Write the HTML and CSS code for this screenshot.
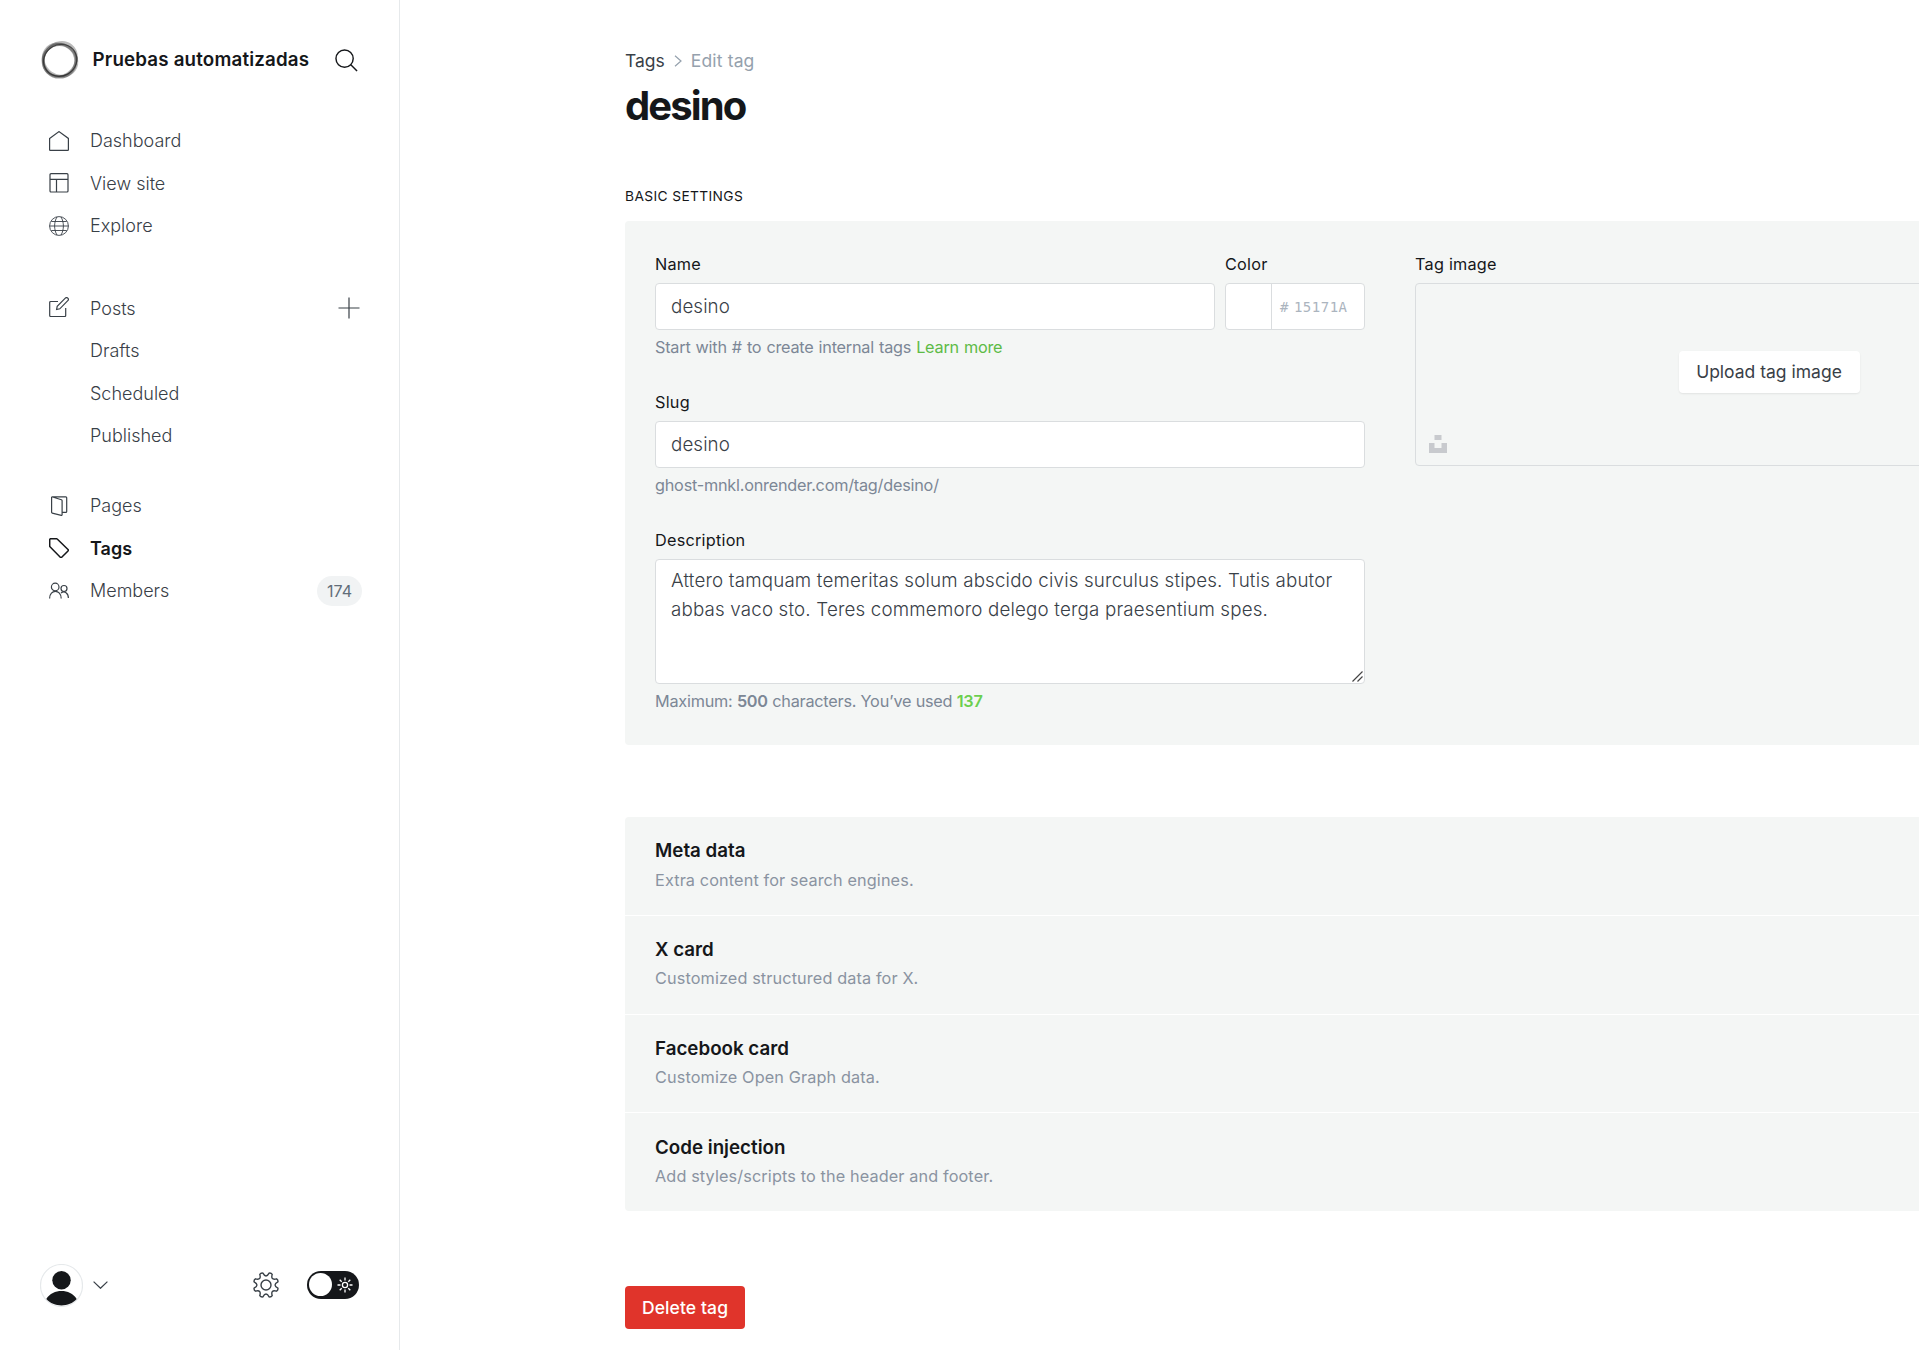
FILE: index.html
```html
<!DOCTYPE html>
<html lang="en">
<head>
<meta charset="utf-8">
<title>Edit tag</title>
<link rel="stylesheet" href="styles.css">
</head>
<body>
<div class="app">
  <nav class="sidebar">
    <header class="brand">
      <svg class="brand-logo" viewBox="0 0 40 40">
        <ellipse cx="20.400" cy="19.600" rx="17.800" ry="15.800" stroke="#555" stroke-opacity=".4" stroke-width="2.600" transform="rotate(-50 20 20)"/>
        <ellipse cx="20" cy="20" rx="17.600" ry="15.600" stroke="#555" stroke-opacity=".4" stroke-width="2.600" transform="rotate(35 20 20)"/>
        <circle cx="19.400" cy="20.800" r="16.300" stroke="#333" stroke-opacity=".45" stroke-width="3"/>
        <ellipse cx="20" cy="20.400" rx="17" ry="15.600" stroke="#222" stroke-opacity=".7" stroke-width="1.200" transform="rotate(-30 20 20)"/>
      </svg>
      <span class="brand-name">Pruebas automatizadas</span>
      <svg class="search" viewBox="0 0 24 24"><circle cx="10" cy="10" r="9"/><path d="M16.5 16.5 23 23"/></svg>
    </header>
    <ul class="nav">
      <li class="item"><svg class="icon" viewBox="0 0 20 20"><path d="M.6 7.4 10 .6l9.400 6.800v11.300a.7.7 0 0 1-.7.7H1.300a.7.7 0 0 1-.7-.7z"/></svg><span>Dashboard</span></li>
      <li class="item"><svg class="icon" viewBox="0 0 20 20"><rect x="1" y=".7" width="18" height="18.300" rx="1"/><path d="M1 6.300h18M7.500 6.300V19"/></svg><span>View site</span></li>
      <li class="item"><svg class="icon thin" viewBox="0 0 20 20"><circle cx="10" cy="10" r="9.400"/><path d="M.6 10h18.800M2.300 5.500h15.400M2.300 14.500h15.400M8 .8C4.800 6.500 4.800 13.500 8 19.200M12 .8c3.200 5.700 3.200 12.700 0 18.400"/></svg><span>Explore</span></li>
    </ul>
    <ul class="nav posts">
      <li class="item"><svg class="icon raised" viewBox="0 0 20 20"><path d="M9 4.500H1.700a1 1 0 0 0-1 1v13a1 1 0 0 0 1 1h14a1 1 0 0 0 1-1V11M7.600 12.500l.6-3.200L16.300 1.200a1.700 1.700 0 0 1 2.500 2.500l-8 8.100z"/></svg><span>Posts</span><svg class="plus" viewBox="0 0 22 22"><path d="M11 .5v21M.5 11h21"/></svg></li>
      <li class="item sub">Drafts</li>
      <li class="item sub">Scheduled</li>
      <li class="item sub">Published</li>
    </ul>
    <ul class="nav pages">
      <li class="item"><svg class="icon" viewBox="0 0 20 20"><path d="M2.600.8v15.500a.8.8 0 0 0 .6.800l9 2.200a.7.7 0 0 0 .9-.7V4.600a1 1 0 0 0-.7-.9L2.800.8h14a.9.9 0 0 1 .9.900v13.700a.9.9 0 0 1-.9.900h-3.700"/></svg><span>Pages</span></li>
      <li class="item active"><svg class="icon" viewBox="0 0 20 20"><path d="M.7 1.700a1 1 0 0 1 1-1h5.800a1 1 0 0 1 .7.3L19 11.500a1 1 0 0 1 0 1.400l-6.300 6.300a1 1 0 0 1-1.400 0L1 8.800a1 1 0 0 1-.3-.7z"/></svg><span>Tags</span></li>
      <li class="item"><svg class="icon" viewBox="0 0 20 20"><circle cx="6.200" cy="6" r="3.800"/><circle cx="15" cy="7.500" r="3"/><path d="M.6 17.500c0-9.400 11.600-9.400 11.600 0M12 12c3.500-2.600 7.400 0 7.400 5"/></svg><span>Members</span><span class="count">174</span></li>
    </ul>
    <footer class="account">
      <svg class="avatar" viewBox="0 0 43 43"><circle cx="21.500" cy="21.500" r="21" fill="#fff" stroke="#e6e9eb"/><circle cx="21.500" cy="16.300" r="9.200" fill="#15171a"/><path d="M6.300 35C13 24.400 30 24.400 36.700 35c-7.500 8.500-22.900 8.500-30.400 0z" fill="#15171a"/></svg>
      <svg class="chevron" viewBox="0 0 15 8"><path d="m.6.600 6.900 6.700L14.400.600"/></svg>
      <svg class="gear" viewBox="0 0 26 26"><circle cx="13" cy="13" r="5"/><path d="M24.900 16.100Q25.300 18.100 23.600 19.200 17.400 17.400 19.200 23.600 18.100 25.300 16.100 24.900 13 19.200 9.900 24.900 7.900 25.300 6.800 23.600 8.600 17.400 2.400 19.200.7 18.100 1.100 16.100 6.800 13 1.100 9.900.7 7.900 2.400 6.800 8.600 8.600 6.800 2.400 7.900.7 9.900 1.100 13 6.800 16.100 1.100 18.100.7 19.200 2.400 17.400 8.600 23.600 6.800 25.300 7.900 24.900 9.900 19.200 13 24.900 16.100z"/></svg>
      <div class="toggle"><span class="knob"></span><svg class="sun" viewBox="0 0 16 16"><circle cx="8" cy="8" r="2.600"/><path d="M8 .5v3M8 12.500v3M.5 8h3M12.500 8h3M2.700 2.700l2 2M11.300 11.300l2 2M2.700 13.300l2-2M11.300 4.700l2-2"/></svg></div>
    </footer>
  </nav>
  <main class="main">
    <div class="crumbs"><span>Tags</span><svg viewBox="0 0 8 12"><path d="m1 .8 6 5.200-6 5.200"/></svg><span class="here">Edit tag</span></div>
    <h1>desino</h1>
    <h2>Basic settings</h2>
    <section class="panel">
      <div class="fields">
        <div class="row">
          <div class="name"><label>Name</label><div class="input">desino</div></div>
          <div class="color"><label>Color</label><div class="input swatch-input"><span class="swatch"></span><span class="hash">#</span><span class="hex">15171A</span></div></div>
        </div>
        <p class="hint intro">Start with # to create internal tags <a>Learn more</a></p>
        <label class="next">Slug</label>
        <div class="input">desino</div>
        <p class="hint">ghost-mnkl.onrender.com/tag/desino/</p>
        <label class="next">Description</label>
        <div class="area-wrap">
          <textarea class="input area" spellcheck="false">Attero tamquam temeritas solum abscido civis surculus stipes. Tutis abutor abbas vaco sto. Teres commemoro delego terga praesentium spes.</textarea>
          <svg class="grip" viewBox="0 0 11 11"><path d="M.5 10.500l10-10M5.500 10.500l5-5"/></svg>
        </div>
        <p class="hint">Maximum: <b>500</b> characters. You’ve used <b class="used">137</b></p>
      </div>
      <div class="image">
        <label>Tag image</label>
        <div class="drop"><span class="upload">Upload tag image</span><svg class="unsplash" viewBox="0 0 18 18"><path d="M5.500 0h7v5h-7zM0 8h5.500v5h7V8H18v10H0z"/></svg></div>
      </div>
    </section>
    <section class="cards">
      <div class="card"><h3>Meta data</h3><p>Extra content for search engines.</p></div>
      <div class="card"><h3>X card</h3><p>Customized structured data for X.</p></div>
      <div class="card"><h3>Facebook card</h3><p>Customize Open Graph data.</p></div>
      <div class="card"><h3>Code injection</h3><p>Add styles/scripts to the header and footer.</p></div>
    </section>
    <button class="delete">Delete tag</button>
  </main>
</div>
</body>
</html>
```
FILE: styles.css
```css
* { box-sizing: border-box; }
body { margin: 0; background: #fff; color: #15171a; font-family: Inter, "Open Sans", sans-serif; overflow: hidden; }
h1, h2, h3, p, ul { margin: 0; padding: 0; }
svg { display: block; flex: none; fill: none; stroke: currentColor; stroke-width: 1.2; }
.app { display: flex; width: 1919px; height: 1350px; overflow: hidden; }

.sidebar { width: 400px; flex: none; border-right: 1px solid #e6e9eb; display: flex; flex-direction: column; padding: 40px 0 44px 40px; }
.brand { display: flex; align-items: center; height: 40px; }
.brand-logo { width: 40px; height: 40px; }
.brand-name { width: 242px; margin-left: 12.500px; font-size: 18.750px; line-height: 24px; font-weight: 600; letter-spacing: .17px; white-space: nowrap; }
.search { width: 23px; height: 23px; stroke-width: 1.500; }
.nav { list-style: none; margin-top: 39.500px; }
.nav.posts { margin-top: 40px; }
.nav.pages { margin-top: 27.500px; }
.item { display: flex; align-items: center; height: 42.500px; padding-left: 9px; font-size: 18px; font-weight: 300; color: #394047; }
.item.sub { padding-left: 50px; }
.icon { width: 20px; height: 20px; margin-right: 21px; }
.raised { margin-bottom: 3px; }
.thin { stroke-width: .9; }
.item.active { color: #15171a; font-weight: 600; }
.active .icon { stroke-width: 1.500; }
.plus { width: 22px; height: 22px; margin-left: auto; margin-right: 39px; }
.count { margin-left: auto; margin-right: 37px; width: 45px; height: 30px; border-radius: 15px; background: #f1f3f4; color: #626d79; font-size: 16px; font-weight: 400; line-height: 30px; text-align: center; }
.account { margin-top: auto; display: flex; align-items: center; height: 43px; color: #394047; }
.avatar { width: 43px; height: 43px; margin-top: 2px; stroke: none; }
.chevron { width: 15px; height: 8px; margin-left: 10px; }
.gear { width: 26px; height: 26px; margin-left: 145px; stroke-width: 1.400; }
.toggle { width: 52px; height: 28px; margin-left: 28px; background: #15171a; border-radius: 14px; display: flex; align-items: center; padding-left: 2px; }
.knob { width: 23px; height: 23px; border-radius: 50%; background: #fff; }
.sun { width: 16px; height: 16px; margin-left: 4.500px; color: #fff; stroke-width: 1.300; }

.main { flex: none; width: 1488px; padding: 46px 0 0 225px; }
.crumbs { display: flex; align-items: center; height: 28px; font-size: 17.500px; color: #394047; }
.crumbs svg { width: 8px; height: 12px; margin: 1px 9px 0; color: #95a1ad; }
.here { color: #95a1ad; letter-spacing: .15px; }
h1 { margin-top: 6px; font-size: 40px; line-height: 52px; font-weight: 700; letter-spacing: -1.900px; }
h2 { margin-top: 53px; font-size: 13.750px; line-height: 22px; font-weight: 400; letter-spacing: .38px; text-transform: uppercase; }
.panel { display: flex; gap: 50px; width: 1400px; height: 524px; margin-top: 14px; padding: 31px 30px 30px; background: #f4f6f5; border-radius: 4px; }
.fields { width: 710px; flex: none; }
.row { display: flex; justify-content: space-between; }
.name { width: 560px; }
.color { width: 140px; }
label { display: block; font-size: 16.250px; line-height: 25px; font-weight: 400; color: #15171a; letter-spacing: .23px; }
.input { display: flex; align-items: center; width: 100%; height: 47px; margin-top: 6px; padding: 0 15px; border: 1px solid #dadddf; border-radius: 4px; background: #fff; color: #394047; font-family: inherit; font-size: 18.750px; font-weight: 300; letter-spacing: .1px; }
.swatch-input { padding: 0; }
.swatch { width: 46px; height: 45px; border-right: 1px solid #dadddf; }
.hash, .hex { font-family: "DejaVu Sans Mono", monospace; font-size: 14px; font-weight: 400; color: #abb4be; letter-spacing: .5px; white-space: nowrap; }
.hash { margin-left: 8px; }
.hex { margin-left: 5px; }
.hint { margin-top: 5px; font-size: 16.250px; line-height: 25px; color: #7c8796; letter-spacing: -.23px; }
.intro { letter-spacing: -.23px; word-spacing: .7px; }
.hint a { color: #5dbb46; }
.hint b { font-weight: 600; }
.hint .used { color: #6ccf4f; }
.next { margin-top: 30px; }
.area-wrap { position: relative; margin-top: 6px; }
.area { display: block; height: 125px; margin: 0; padding: 6px 15px; line-height: 29px; letter-spacing: .17px; resize: none; outline: none; overflow: hidden; }
.grip { position: absolute; right: 2px; bottom: 2px; width: 11px; height: 11px; color: #444; }
.image { flex: 1; }
.drop { position: relative; display: flex; align-items: center; justify-content: center; width: 710px; height: 183px; margin-top: 6px; border: 1px solid #dadddf; border-radius: 4px; }
.upload { height: 42px; width: 181px; margin: 0 2px 6px 0; line-height: 42px; text-align: center; border-radius: 4px; background: #fff; color: #394047; font-size: 17.500px; box-shadow: 0 1px 2px rgba(0,0,0,.08); }
.unsplash { position: absolute; left: 13px; bottom: 12px; width: 18px; height: 18px; fill: #c8cace; stroke: none; }
.cards { width: 1400px; margin-top: 72px; display: flex; flex-direction: column; gap: 1px; border-radius: 4px; overflow: hidden; }
.card { height: 97.750px; padding: 21.300px 30px 0; background: #f4f6f5; }
h3 { font-size: 18.750px; line-height: 26px; font-weight: 600; }
.card p { margin-top: 3.300px; font-size: 16.250px; line-height: 24px; color: #8a93a1; letter-spacing: .12px; }
.delete { display: block; width: 120px; height: 43px; margin-top: 75px; border: 0; border-radius: 4px; padding: 0 0 1px; background: #e0342b; color: #fff; font: 500 17.500px Inter, sans-serif; letter-spacing: .1px; }
```
